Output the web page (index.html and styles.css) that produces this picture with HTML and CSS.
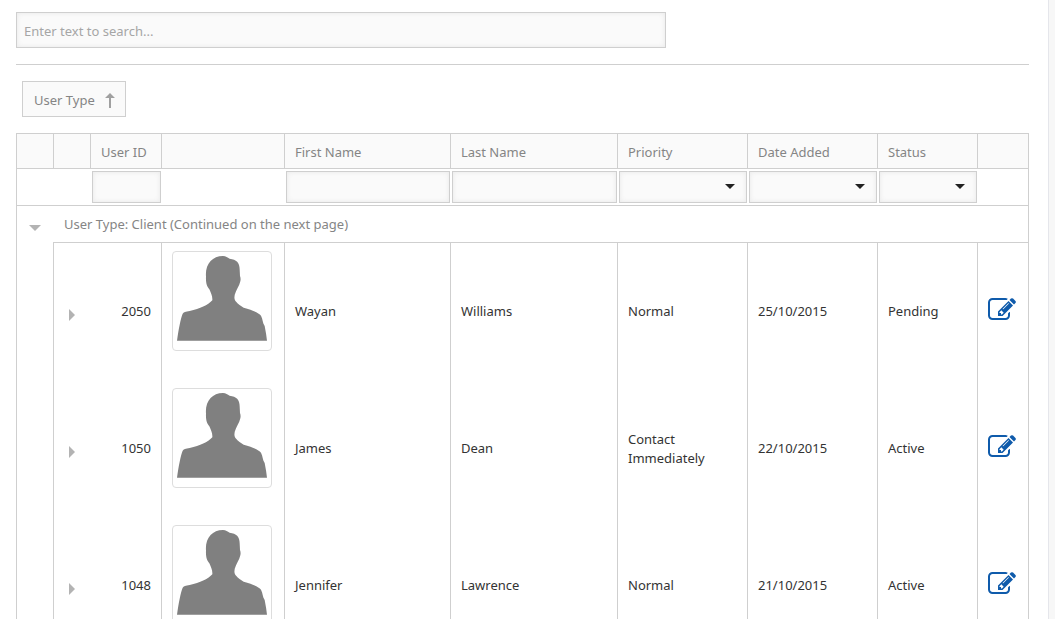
FILE: index.html
```html
<!DOCTYPE html>
<html lang="en">
<head>
<meta charset="utf-8">
<title>Users</title>
<link rel="stylesheet" href="styles.css">
</head>
<body>
<svg class="symbols" aria-hidden="true">
  <symbol id="person" viewBox="0 0 270 270">
    <path d="M0 254C5 220 11 186 17 173Q20 167 38 165C70 158 92 148 106 133C107 120 101 110 97 100C90 92 86 82 87 62C84 25 105 0 138 0C147 0 151 5 158 8C178 10 188 20 188 40L189 60Q192 68 190 76C186 92 180 98 176 109C171 119 171 130 176 136C185 146 190 150 200 155C225 162 245 170 252 179C258 190 256 200 263 210Q268 235 270 254Z"/>
  </symbol>
  <symbol id="edit" viewBox="0 0 1792 1792">
    <path d="M888 1184l116-116-152-152-116 116v56h96v96h56zm440-720q-16-16-33 1l-350 350q-17 17-1 33t33-1l350-350q17-17 1-33zm80 594v190q0 119-84.500 203.500t-203.500 84.500h-832q-119 0-203.500-84.500t-84.500-203.500v-832q0-119 84.500-203.500t203.500-84.500h832q63 0 117 25 15 7 18 23 3 17-9 29l-49 49q-14 14-32 8-23-6-45-6h-832q-66 0-113 47t-47 113v832q0 66 47 113t113 47h832q66 0 113-47t47-113v-126q0-13 9-22l64-64q15-15 35-7t20 29zm-96-738l288 288-672 672h-288v-288zm444 132l-92 92-288-288 92-92q28-28 68-28t68 28l152 152q28 28 28 68t-28 68z"/>
  </symbol>
  <symbol id="down" viewBox="0 0 12 6"><path d="M0 0h12L6 6z"/></symbol>
  <symbol id="right" viewBox="0 0 6 12"><path d="M0 0v12L6 6z"/></symbol>
</svg>
<main class="panel">
  <div class="search">
    <input class="field" type="text" placeholder="Enter text to search..." aria-label="Search">
  </div>
  <div class="group-panel">
    <button class="group-tag" type="button"><span class="label">User Type</span>
      <svg class="sort" viewBox="0 0 10 15" aria-hidden="true"><path d="M5 0L10 5H6V15H4V5H0Z"/></svg>
    </button>
  </div>
  <table class="grid">
    <colgroup>
      <col class="c-tool"><col class="c-tool"><col class="c-id"><col class="c-photo"><col class="c-first"><col><col class="c-mid"><col class="c-mid"><col class="c-status"><col class="c-edit">
    </colgroup>
    <thead>
      <tr class="heads">
        <th></th><th></th><th>User ID</th><th></th><th>First Name</th><th>Last Name</th><th>Priority</th><th>Date Added</th><th>Status</th><th></th>
      </tr>
      <tr class="filters">
        <td></td><td></td>
        <td><input class="field" type="text" aria-label="Filter User ID"></td>
        <td></td>
        <td><input class="field" type="text" aria-label="Filter First Name"></td>
        <td><input class="field" type="text" aria-label="Filter Last Name"></td>
        <td><div class="drop"><select class="field" aria-label="Filter Priority"><option></option></select></div></td>
        <td><div class="drop"><select class="field" aria-label="Filter Date Added"><option></option></select></div></td>
        <td><div class="drop"><select class="field" aria-label="Filter Status"><option></option></select></div></td>
        <td></td>
      </tr>
    </thead>
    <tbody>
      <tr class="group">
        <td class="tool"><button class="toggle" type="button" aria-label="Collapse group"><svg class="down"><use href="#down"/></svg></button></td>
        <td class="group-title" colspan="9">User Type: Client (Continued on the next page)</td>
      </tr>
      <tr class="row">
        <td></td>
        <td class="tool"><button class="toggle" type="button" aria-label="Expand 2050"><svg class="right"><use href="#right"/></svg></button></td>
        <td class="id">2050</td>
        <td class="photo"><svg class="avatar"><use href="#person"/></svg></td>
        <td>Wayan</td><td>Williams</td><td>Normal</td><td>25/10/2015</td><td>Pending</td>
        <td class="action"><a class="edit" href="#2050" aria-label="Edit 2050"><svg><use href="#edit"/></svg></a></td>
      </tr>
      <tr class="row">
        <td></td>
        <td class="tool"><button class="toggle" type="button" aria-label="Expand 1050"><svg class="right"><use href="#right"/></svg></button></td>
        <td class="id">1050</td>
        <td class="photo"><svg class="avatar"><use href="#person"/></svg></td>
        <td>James</td><td>Dean</td><td>Contact Immediately</td><td>22/10/2015</td><td>Active</td>
        <td class="action"><a class="edit" href="#1050" aria-label="Edit 1050"><svg><use href="#edit"/></svg></a></td>
      </tr>
      <tr class="row">
        <td></td>
        <td class="tool"><button class="toggle" type="button" aria-label="Expand 1048"><svg class="right"><use href="#right"/></svg></button></td>
        <td class="id">1048</td>
        <td class="photo"><svg class="avatar"><use href="#person"/></svg></td>
        <td>Jennifer</td><td>Lawrence</td><td>Normal</td><td>21/10/2015</td><td>Active</td>
        <td class="action"><a class="edit" href="#1048" aria-label="Edit 1048"><svg><use href="#edit"/></svg></a></td>
      </tr>
    </tbody>
  </table>
</main>
</body>
</html>
```

FILE: styles.css
```css
* { box-sizing: border-box; }

body {
  margin: 0;
  height: 100vh;
  overflow: hidden;
  background: #f7f7f7;
  color: #333;
  font: 13px/19px "Segoe UI", "Noto Sans", "Open Sans", sans-serif;
}

.symbols { display: none; }

.panel {
  min-height: 100vh;
  margin-right: 6px;
  padding: 12px 19px 0 16px;
  border-right: 1px solid #e5e6eb;
  background: #fff;
}

.field {
  display: block;
  width: 100%;
  height: 32px;
  margin: 0;
  padding: 2px 7px 0;
  border: 1px solid #cfcfcf;
  border-radius: 0;
  background: #fafafa;
  box-shadow: inset 0 0 5px #e8e8e8;
  color: #333;
  font: inherit;
  appearance: none;
}

.field::placeholder { color: #a6a6a6; opacity: 1; }

.search {
  padding-bottom: 16px;
  border-bottom: 1px solid #cfcfcf;
}

.search .field { max-width: 650px; height: 36px; }

.group-panel { padding: 16px 6px; }

.group-tag {
  display: flex;
  align-items: center;
  gap: 10px;
  height: 36px;
  padding: 0 10px 0 11px;
  border: 1px solid #cfcfcf;
  background: #fafafa;
  color: #858585;
  font: inherit;
}

.label { padding-top: 2px; }

.sort { width: 10px; height: 15px; margin-top: 2px; fill: #a0a0a0; }

.grid {
  width: 100%;
  table-layout: fixed;
  border-collapse: separate;
  border-spacing: 0;
  border-top: 1px solid #cfcfcf;
  border-right: 1px solid #cfcfcf;
}

.c-tool { width: 37px; }
.c-id { width: 71px; }
.c-photo { width: 123px; }
.c-first { width: 16.4%; }
.c-mid { width: 130px; }
.c-status { width: 100px; }
.c-edit { width: 51px; }

.grid th,
.grid td {
  padding: 0 10px;
  border-left: 1px solid #cfcfcf;
  text-align: left;
  vertical-align: middle;
}

.heads { height: 35px; }

.grid .heads th {
  padding-top: 2px;
  border-bottom: 1px solid #cfcfcf;
  background: #fafafa;
  color: #858585;
  font-weight: 400;
}

.grid .filters td {
  padding: 2px 0 2px 2px;
  border-bottom: 1px solid #cfcfcf;
}

.grid .filters td:not(:first-child) { border-left: 0; }

.drop { position: relative; }

.drop::after {
  content: "";
  position: absolute;
  top: 13px;
  right: 12px;
  border: 5px solid transparent;
  border-top-color: #222;
  border-bottom: 0;
  pointer-events: none;
}

.group { height: 37px; }

.grid .group-title {
  padding-left: 11px;
  border-left: 0;
  border-bottom: 1px solid #cfcfcf;
  color: #858585;
}

.row { height: 137px; }

.grid .tool { padding: 7px 0 0; }

.grid .row .id { border-left: 0; text-align: right; }

.toggle {
  display: flex;
  align-items: center;
  justify-content: center;
  width: 100%;
  height: 20px;
  padding: 0;
  border: 0;
  background: none;
}

.toggle svg { fill: #b3b3b3; }
.down { width: 12px; height: 6px; }
.right { width: 6px; height: 12px; }

.grid .photo { padding-top: 8px; vertical-align: top; }

.avatar {
  display: block;
  width: 100px;
  height: 100px;
  padding: 4px;
  border: 1px solid #ddd;
  border-radius: 4px;
  fill: #808080;
}

.grid .action { padding-bottom: 4px; }

.edit svg {
  display: block;
  width: 28px;
  height: 28px;
  fill: #0f5bab;
}
```
